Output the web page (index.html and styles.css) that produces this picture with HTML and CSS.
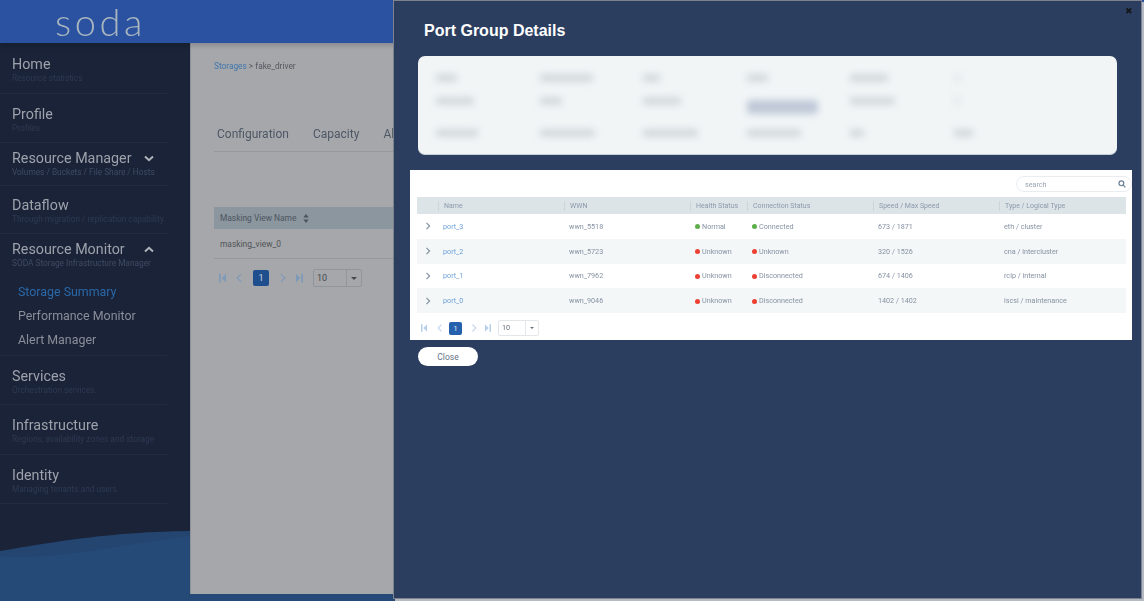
FILE: index.html
```html
<!DOCTYPE html>
<html lang="en">
<head>
    <meta charset="UTF-8">
    <meta name="viewport" content="width=device-width, initial-scale=1.0">
    <title>Port Group Details</title>
    <link rel="stylesheet" href="styles.css">
</head>
<body>
    <header class="topbar">
        <span class="logo">soda</span>
    </header>
    <div class="page">
        <nav class="sidebar">
            <div class="menu-item home">
                <div class="menu-title">Home</div>
                <div class="menu-sub">Resource statistics</div>
            </div>
            <div class="menu-item">
                <div class="menu-title">Profile</div>
                <div class="menu-sub">Profiles</div>
            </div>
            <div class="menu-item compact manager">
                <div class="menu-title">Resource Manager
                    <svg class="chevron" viewBox="0 0 10 7"><path d="M1 1.5 5 5.2 9 1.5"/></svg>
                </div>
                <div class="menu-sub">Volumes / Buckets / File Share / Hosts</div>
            </div>
            <div class="menu-item dataflow">
                <div class="menu-title">Dataflow</div>
                <div class="menu-sub">Through migration / replication capability.</div>
            </div>
            <div class="menu-item compact monitor">
                <div class="menu-title">Resource Monitor
                    <svg class="chevron" viewBox="0 0 10 7"><path d="M1 5.5 5 1.8 9 5.5"/></svg>
                </div>
                <div class="menu-sub">SODA Storage Infrastructure Manager</div>
                <div class="menu-links">
                    <div class="menu-link active">Storage Summary</div>
                    <div class="menu-link">Performance Monitor</div>
                    <div class="menu-link">Alert Manager</div>
                </div>
            </div>
            <div class="menu-item">
                <div class="menu-title">Services</div>
                <div class="menu-sub">Orchestration services.</div>
            </div>
            <div class="menu-item wide">
                <div class="menu-title">Infrastructure</div>
                <div class="menu-sub">Regions, availability zones and storage</div>
            </div>
            <div class="menu-item">
                <div class="menu-title">Identity</div>
                <div class="menu-sub">Managing tenants and users</div>
            </div>
            <svg class="wave" viewBox="0 0 190 70" preserveAspectRatio="none">
                <path class="wave-back" d="M0 20C60 10 110 1 190 0V70H0Z"/>
                <path class="wave-front" d="M0 25C50 30 120 14 190 5V70H0Z"/>
            </svg>
        </nav>
        <main class="content">
            <div class="breadcrumb"><span class="crumb-link">Storages</span> &gt; fake_driver</div>
            <div class="tabs">
                <span>Configuration</span>
                <span>Capacity</span>
                <span>Alerts</span>
            </div>
            <div class="view-head">Masking View Name
                <svg class="sort" viewBox="0 0 6 10"><path d="M3 0 6 4H0ZM3 10 0 6H6Z"/></svg>
            </div>
            <div class="view-row">masking_view_0</div>
            <div class="pager back-pager">
                <svg class="pg-icon" viewBox="0 0 8 10"><path d="M0 0H2V10H0ZM8 0V10L3 5Z"/></svg>
                <svg class="pg-icon line" viewBox="0 0 8 10"><path d="M6 .5 1.5 5 6 9.5"/></svg>
                <span class="pg-num">1</span>
                <svg class="pg-icon line" viewBox="0 0 8 10"><path d="M2 .5 6.5 5 2 9.5"/></svg>
                <svg class="pg-icon" viewBox="0 0 8 10"><path d="M8 0H6V10H8ZM0 0V10L5 5Z"/></svg>
                <div class="pg-select"><span class="pg-value">10</span><span class="pg-arrow"></span></div>
            </div>
        </main>
    </div>

    <section class="modal">
        <span class="modal-x">&#10006;</span>
        <h2 class="modal-title">Port Group Details</h2>
        <div class="summary">
            <div class="summary-grid">
                <i class="blob w21"></i><i class="blob w53"></i><i class="blob w17"></i><i class="blob w21"></i><i class="blob w38"></i><i class="blob w7"></i>
                <i class="blob w38"></i><i class="blob w22"></i><i class="blob w38"></i><i class="blob pill"></i><i class="blob w45"></i><i class="blob w7"></i>
                <i class="blob w42"></i><i class="blob w55"></i><i class="blob w55"></i><i class="blob w54"></i><i class="blob w14"></i><i class="blob w19"></i>
            </div>
        </div>
        <div class="ports">
            <div class="search-row">
                <div class="search">
                    <span>search</span>
                    <svg class="search-icon" viewBox="0 0 10 10"><circle cx="4.2" cy="4.2" r="3"/><path d="M6.5 6.5 9.2 9.2"/></svg>
                </div>
            </div>
            <table class="port-table">
                <thead>
                    <tr>
                        <th class="col-arrow"></th>
                        <th class="col-wide"><span>Name</span></th>
                        <th class="col-wide"><span>WWN</span></th>
                        <th class="col-health"><span>Health Status</span></th>
                        <th class="col-wide"><span>Connection Status</span></th>
                        <th class="col-wide"><span>Speed / Max Speed</span></th>
                        <th><span>Type / Logical Type</span></th>
                    </tr>
                </thead>
                <tbody>
                    <tr>
                        <td class="arrow-cell"><svg class="row-arrow" viewBox="0 0 6 8"><path d="M1.5 .8 4.6 4 1.5 7.2"/></svg></td>
                        <td class="port-link">port_3</td><td>wwn_5518</td>
                        <td><i class="dot ok"></i>Normal</td><td><i class="dot ok"></i>Connected</td>
                        <td>673 / 1871</td><td>eth / cluster</td>
                    </tr>
                    <tr>
                        <td class="arrow-cell"><svg class="row-arrow" viewBox="0 0 6 8"><path d="M1.5 .8 4.6 4 1.5 7.2"/></svg></td>
                        <td class="port-link">port_2</td><td>wwn_5723</td>
                        <td><i class="dot bad"></i>Unknown</td><td><i class="dot bad"></i>Unknown</td>
                        <td>320 / 1526</td><td>cna / intercluster</td>
                    </tr>
                    <tr>
                        <td class="arrow-cell"><svg class="row-arrow" viewBox="0 0 6 8"><path d="M1.5 .8 4.6 4 1.5 7.2"/></svg></td>
                        <td class="port-link">port_1</td><td>wwn_7962</td>
                        <td><i class="dot bad"></i>Unknown</td><td><i class="dot bad"></i>Disconnected</td>
                        <td>674 / 1406</td><td>rcip / internal</td>
                    </tr>
                    <tr>
                        <td class="arrow-cell"><svg class="row-arrow" viewBox="0 0 6 8"><path d="M1.5 .8 4.6 4 1.5 7.2"/></svg></td>
                        <td class="port-link">port_0</td><td>wwn_9046</td>
                        <td><i class="dot bad"></i>Unknown</td><td><i class="dot bad"></i>Disconnected</td>
                        <td>1402 / 1402</td><td>iscsi / maintenance</td>
                    </tr>
                </tbody>
            </table>
            <div class="pager modal-pager">
                <svg class="pg-icon" viewBox="0 0 8 10"><path d="M0 0H2V10H0ZM8 0V10L3 5Z"/></svg>
                <svg class="pg-icon line" viewBox="0 0 8 10"><path d="M6 .5 1.5 5 6 9.5"/></svg>
                <span class="pg-num">1</span>
                <svg class="pg-icon line" viewBox="0 0 8 10"><path d="M2 .5 6.5 5 2 9.5"/></svg>
                <svg class="pg-icon" viewBox="0 0 8 10"><path d="M8 0H6V10H8ZM0 0V10L5 5Z"/></svg>
                <div class="pg-select"><span class="pg-value">10</span><span class="pg-arrow"></span></div>
            </div>
        </div>
        <button class="close-btn" type="button">Close</button>
    </section>
</body>
</html>
```

FILE: styles.css
```css
* {
    box-sizing: border-box;
}

body {
    margin: 0;
    height: 601px;
    overflow: hidden;
    position: relative;
    display: flex;
    flex-direction: column;
    background-color: #254a78;
    font-family: Roboto, sans-serif;
}

/* top bar */
.topbar {
    height: 43px;
    flex: none;
    padding-left: 55px;
    background-color: #2b52a0;
    box-shadow: 0 2px 6px rgba(0, 0, 0, 0.2);
    position: relative;
    z-index: 1;
}

.logo {
    display: block;
    font-family: Lato, sans-serif;
    font-weight: 300;
    font-size: 38px;
    line-height: 43px;
    letter-spacing: 3.6px;
    color: #a9b6bf;
    filter: blur(0.4px);
}

.page {
    flex: 1;
    display: flex;
    min-height: 0;
}

/* left menu */
.sidebar {
    width: 190px;
    flex: none;
    position: relative;
    background-color: #1a2338;
}

.menu-item {
    position: relative;
    z-index: 1;
    width: 167px;
    height: 49px;
    padding: 11px 0 0 12px;
    border-bottom: 1px solid #202b44;
}

.menu-item.home {
    height: 51px;
    padding-top: 12px;
}

.menu-item.compact {
    padding-top: 6px;
}

.menu-item.manager {
    height: 43px;
}

.menu-item.dataflow {
    height: 48px;
    padding-top: 10px;
}

.menu-item.monitor {
    height: 122px;
}

.menu-item.wide {
    height: 50px;
}

.menu-title {
    display: flex;
    align-items: center;
    height: 18px;
    font-size: 14.3px;
    color: #9da2ab;
    white-space: nowrap;
    filter: blur(0.3px);
}

.compact .menu-title {
    width: 142px;
    justify-content: space-between;
}

.menu-sub {
    height: 10px;
    font-size: 8.3px;
    line-height: 10px;
    color: #2e3a52;
    white-space: nowrap;
    filter: blur(0.3px);
}

.compact .menu-sub {
    color: #3f4b63;
}

.chevron {
    width: 10px;
    height: 7px;
    fill: none;
    stroke: #b0b4bb;
    stroke-width: 2;
}

.menu-links {
    margin-top: 12px;
    padding-left: 6px;
    filter: blur(0.3px);
}

.menu-link {
    height: 24px;
    font-size: 12.4px;
    line-height: 24px;
    color: #8a8e98;
}

.menu-link.active {
    color: #2a68a8;
}

.wave {
    position: absolute;
    left: 0;
    bottom: 0;
    width: 190px;
    height: 70px;
}

.wave-back {
    fill: #23456f;
}

.wave-front {
    fill: #254a78;
}

/* page behind the modal */
.content {
    flex: 1;
    height: 551px;
    padding: 17px 0 0 23px;
    background-color: #a6a7aa;
    border-left: 1px solid #8f9297;
}

.breadcrumb {
    height: 11px;
    margin-top: 1px;
    font-size: 8.3px;
    line-height: 11px;
    color: #53585f;
    filter: blur(0.3px);
}

.crumb-link {
    color: #3f76ad;
}

.tabs {
    display: flex;
    gap: 24px;
    margin-top: 54px;
    width: 300px;
    height: 26px;
    padding-left: 3px;
    font-size: 12px;
    line-height: 16px;
    color: #4d5866;
    border-bottom: 1px solid #96989c;
    filter: blur(0.3px);
}

.view-head {
    display: flex;
    align-items: center;
    margin-top: 55px;
    height: 22px;
    padding-left: 6px;
    font-size: 8.4px;
    color: #4b5560;
    background-color: #8c969e;
}

.sort {
    width: 6px;
    height: 9px;
    margin-left: 7px;
    fill: #4b5560;
}

.view-row {
    height: 30px;
    padding-left: 6px;
    font-size: 8.4px;
    line-height: 30px;
    color: #4f5358;
    border-bottom: 1px solid #96989c;
}

/* pagination, used in both tables */
.pager {
    display: flex;
    align-items: center;
}

.pg-icon {
    fill: #7f9ab9;
}

.pg-icon.line {
    fill: none;
    stroke: #7f9ab9;
    stroke-width: 1.4;
}

.pg-num {
    text-align: center;
    color: #cdd3dc;
    background-color: #1f4e8f;
    border-radius: 2px;
}

.pg-select {
    display: flex;
    border: 1px solid #92959a;
    border-radius: 2px;
}

.pg-value {
    flex: 1;
    padding-left: 3px;
    color: #45494f;
}

.pg-arrow {
    position: relative;
    border-left: 1px solid #92959a;
}

.pg-arrow::after {
    content: "";
    position: absolute;
    top: 50%;
    left: 50%;
    margin: -1px 0 0 -3px;
    border-top: 3px solid #45494f;
    border-left: 3px solid transparent;
    border-right: 3px solid transparent;
}

.back-pager {
    margin-top: 10px;
    padding-left: 5px;
    gap: 10px;
    font-size: 9px;
}

.back-pager .pg-icon {
    width: 7px;
    height: 10px;
}

.back-pager .pg-num {
    width: 16px;
    height: 16px;
    line-height: 16px;
}

.back-pager .pg-select {
    width: 49px;
    height: 18px;
    line-height: 16px;
}

.back-pager .pg-arrow {
    width: 15px;
}

/* modal */
.modal {
    position: absolute;
    top: 0;
    left: 393px;
    z-index: 2;
    width: 749px;
    height: 599px;
    padding: 0 0 0 24px;
    background-color: #2c3e5f;
    border: 1px solid #7d828c;
    box-shadow: 2px 2px 0 #b4b9c4;
}

.modal-x {
    position: absolute;
    top: 5px;
    right: 8px;
    font-size: 9px;
    line-height: 10px;
    color: #14171c;
    filter: blur(0.4px);
}

.modal-title {
    margin: 21px 0 0 6px;
    height: 18px;
    font-family: "Liberation Sans", sans-serif;
    font-size: 16px;
    line-height: 18px;
    font-weight: 700;
    color: #fff;
}

.summary {
    width: 699px;
    height: 99px;
    margin-top: 16px;
    background-color: #f1f5f6;
    border-radius: 7px;
    border-bottom: 1px solid #c8ced6;
    overflow: hidden;
}

.summary-grid {
    display: grid;
    grid-template-columns: repeat(6, 103.5px);
    grid-template-rows: 20px 26px 38px;
    align-items: center;
    padding: 12px 0 0 18px;
    filter: blur(3.5px);
}

.blob {
    height: 8px;
    background-color: #d3d9dd;
}

.w7 { width: 7px; opacity: 0.4; }
.w14 { width: 14px; }
.w17 { width: 17px; }
.w19 { width: 19px; }
.w21 { width: 21px; }
.w22 { width: 22px; }
.w38 { width: 38px; }
.w42 { width: 42px; }
.w45 { width: 45px; }
.w53 { width: 53px; }
.w54 { width: 54px; }
.w55 { width: 55px; }

.blob.pill {
    align-self: end;
    width: 71px;
    height: 14px;
    background-color: #bfc8d8;
    border-radius: 4px;
}

.ports {
    width: 722px;
    height: 170px;
    margin: 15px 0 0 -8px;
    padding: 6px 0 0 7px;
    background-color: #fff;
    font-size: 7.2px;
}

.search-row,
.port-table,
.modal-pager {
    filter: blur(0.4px);
}

.search-row {
    display: flex;
    justify-content: flex-end;
    height: 21px;
}

.search {
    display: flex;
    align-items: center;
    justify-content: space-between;
    width: 116px;
    height: 16px;
    padding: 0 5px 0 8px;
    font-size: 7.2px;
    color: #9aa5b4;
    border: 1px solid #e9edf0;
    border-radius: 8px;
}

.search-icon {
    width: 8px;
    height: 8px;
    fill: none;
    stroke: #6a8096;
    stroke-width: 1.5;
}

.port-table {
    width: 709px;
    table-layout: fixed;
    border-collapse: collapse;
}

.col-arrow {
    width: 21px;
}

.col-wide {
    width: 126px;
}

.col-health {
    width: 57px;
}

.port-table th {
    height: 17px;
    padding: 0;
    font-size: 7px;
    font-weight: 400;
    text-align: left;
    color: #8b99ac;
    background-color: #dde4e8;
}

.port-table th span {
    display: block;
    padding-left: 5px;
    line-height: 10px;
    border-left: 1px solid #cdd5da;
    white-space: nowrap;
}

.port-table td {
    height: 24.75px;
    padding: 0 0 0 5px;
    color: #8792a3;
    white-space: nowrap;
}

.port-table tbody tr:nth-child(even) td {
    background-color: #f3f7f8;
}

.port-table .arrow-cell {
    padding-left: 8px;
}

.port-table .port-link {
    color: #6fa1d8;
}

.row-arrow {
    display: block;
    width: 6px;
    height: 8px;
    fill: none;
    stroke: #8593a4;
    stroke-width: 1.2;
}

.dot {
    display: inline-block;
    width: 5px;
    height: 5px;
    margin-right: 2px;
    border-radius: 50%;
    vertical-align: -0.5px;
}

.dot.ok {
    background-color: #5cae4a;
}

.dot.bad {
    background-color: #ec4132;
}

.modal-pager {
    margin-top: 7px;
    padding-left: 4px;
    font-size: 7.2px;
}

.modal-pager .pg-icon {
    width: 6px;
    height: 8px;
    fill: #b9d0ec;
    margin-right: 8px;
}

.modal-pager .pg-icon:first-child {
    margin-right: 10px;
}

.modal-pager .pg-icon:nth-child(2) {
    margin-right: 6px;
}

.modal-pager .pg-icon.line {
    fill: none;
    stroke: #b9d0ec;
}

.modal-pager .pg-num {
    width: 13px;
    height: 13px;
    margin-right: 9px;
    line-height: 13px;
    color: #e6edf6;
    background-color: #2561ad;
}

.modal-pager .pg-select {
    width: 41px;
    height: 16px;
    margin-left: -1px;
    line-height: 14px;
    border-color: #e3e7ea;
}

.modal-pager .pg-value {
    color: #66707c;
}

.modal-pager .pg-arrow {
    width: 13px;
    border-left-color: #e3e7ea;
}

.modal-pager .pg-arrow::after {
    margin: -1px 0 0 -2px;
    border-top: 2.5px solid #66707c;
    border-left: 2.5px solid transparent;
    border-right: 2.5px solid transparent;
}

.close-btn {
    display: block;
    width: 60px;
    height: 19px;
    margin-top: 7px;
    padding: 0;
    border: none;
    border-radius: 10px;
    background-color: #fff;
    font-family: Roboto, sans-serif;
    font-size: 8.5px;
    color: #657285;
}
```
